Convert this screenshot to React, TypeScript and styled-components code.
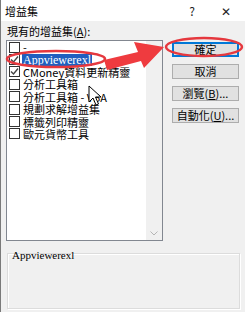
import React from 'react';
import styled, { createGlobalStyle } from 'styled-components';

const GlobalStyle = createGlobalStyle`
  html, body {
    margin: 0;
    padding: 0;
    background: #f0f0f0;
  }
  body {
    font-family: "Noto Sans CJK TC", "Liberation Sans", sans-serif;
  }
`;

const Window = styled.div`
  position: relative;
  width: 245px;
  height: 312px;
  box-sizing: border-box;
  border-left: 1px solid #7a7a7a;
  background: #f0f0f0;
  overflow: hidden;
  display: flex;
  flex-direction: column;
`;

const TitleBar = styled.div`
  height: 21px;
  background: #ffffff;
  display: flex;
  align-items: center;
  padding-left: 4px;
  font-size: 11px;
  color: #000;
`;

const Title = styled.span`
  flex: 1;
`;

const TitleButton = styled.span<{ $w: number }>`
  width: ${(p) => p.$w}px;
  text-align: center;
  font-size: 12px;
  color: #222;
`;

const Body = styled.div`
  flex: 1;
  display: flex;
  flex-direction: column;
  padding: 3px 6px 0 5px;
`;

const Label = styled.div`
  font-size: 11px;
  line-height: 14px;
  height: 16px;
  padding-left: 1px;
  color: #000;
`;

const Main = styled.div`
  display: flex;
  gap: 9px;
`;

const ListBox = styled.div`
  width: 157px;
  height: 201px;
  box-sizing: border-box;
  border: 1px solid #828790;
  background: #ffffff;
  display: flex;
`;

const Rows = styled.div`
  flex: 1;
`;

const Row = styled.div`
  height: 12.4px;
  display: flex;
  align-items: center;
  padding-left: 2px;
  font-size: 11px;
  line-height: 12px;
  white-space: nowrap;
`;

const Check = styled.span`
  width: 9px;
  height: 9px;
  border: 1px solid #333;
  background: #fff;
  margin-right: 2px;
  flex: none;
  display: flex;
  align-items: center;
  justify-content: center;
`;

const ItemText = styled.span<{ $selected?: boolean }>`
  padding: 0 1px;
  line-height: 12px;
  color: ${(p) => (p.$selected ? '#ffffff' : '#000')};
  background: ${(p) => (p.$selected ? '#1f5fbf' : 'transparent')};
  font-family: ${(p) => (p.$selected ? '"Liberation Serif", serif' : 'inherit')};
  font-size: ${(p) => (p.$selected ? '12px' : '11px')};
`;

const ScrollBar = styled.div`
  width: 16px;
  background: #f0f0f0;
  display: flex;
  flex-direction: column;
  justify-content: flex-end;
  align-items: center;
  padding-bottom: 4px;
`;

const Buttons = styled.div`
  display: flex;
  flex-direction: column;
  gap: 7px;
  padding-top: 2px;
`;

const Button = styled.div<{ $default?: boolean }>`
  width: 67px;
  height: 15px;
  box-sizing: border-box;
  border: 1px solid ${(p) => (p.$default ? '#0078d7' : '#adadad')};
  box-shadow: ${(p) => (p.$default ? 'inset 0 0 0 1px #0078d7' : 'none')};
  background: #e1e1e1;
  font-size: 11px;
  line-height: 13px;
  text-align: center;
  color: #000;
`;

const Description = styled.div`
  margin-top: 12px;
  margin-left: 1px;
  width: 233px;
  height: 56px;
  box-sizing: border-box;
  border: 1px solid #dcdcdc;
  box-shadow: inset 1px 1px 0 #ffffff, 1px 1px 0 #ffffff;
`;

const DescText = styled.span`
  display: block;
  margin-top: -4px;
  margin-left: 4px;
  font-family: "Liberation Serif", serif;
  font-size: 11px;
  line-height: 11px;
  color: #000;
`;

const Overlay = styled.svg`
  position: absolute;
  left: 0;
  top: 0;
  pointer-events: none;
`;

const items = [
  { name: '-', checked: false },
  { name: 'Appviewerexl', checked: true, selected: true },
  { name: 'CMoney資料更新精靈', checked: true },
  { name: '分析工具箱', checked: false },
  { name: '分析工具箱 - VBA', checked: false },
  { name: '規劃求解增益集', checked: false },
  { name: '標籤列印精靈', checked: false },
  { name: '歐元貨幣工具', checked: false },
];

const CheckMark = () => (
  <svg width="9" height="9" viewBox="0 0 9 9">
    <path d="M1 4.5 L3.5 7 L8 1.5" fill="none" stroke="#444" strokeWidth="1.4" />
  </svg>
);

export default function App() {
  return (
    <>
      <GlobalStyle />
      <Window>
        <TitleBar>
          <Title>增益集</Title>
          <TitleButton $w={30}>?</TitleButton>
          <TitleButton $w={38}>✕</TitleButton>
        </TitleBar>
        <Body>
          <Label>現有的增益集(<u>A</u>):</Label>
          <Main>
            <ListBox>
              <Rows>
                {items.map((it) => (
                  <Row key={it.name}>
                    <Check>{it.checked && <CheckMark />}</Check>
                    <ItemText $selected={it.selected}>{it.name}</ItemText>
                  </Row>
                ))}
              </Rows>
              <ScrollBar>
                <svg width="8" height="5" viewBox="0 0 8 5">
                  <path d="M0.5 0.5 L4 4 L7.5 0.5" fill="none" stroke="#b5b5b5" strokeWidth="1" />
                </svg>
              </ScrollBar>
            </ListBox>
            <Buttons>
              <Button $default>確定</Button>
              <Button>取消</Button>
              <Button>瀏覽(<u>B</u>)...</Button>
              <Button>自動化(<u>U</u>)...</Button>
            </Buttons>
          </Main>
          <Description>
            <DescText>Appviewerexl</DescText>
          </Description>
        </Body>
        <Overlay width="245" height="312" viewBox="0 0 245 312">
          <ellipse cx="55" cy="59" rx="49" ry="8" fill="none" stroke="#e5383e" strokeWidth="2.5" />
          <ellipse cx="203" cy="47" rx="38" ry="9" fill="none" stroke="#e5383e" strokeWidth="2.5" />
          <polygon
            points="103,60 137,52 133,42 163,47 143,68 140,61 106,70"
            fill="#ef3b3f"
          />
          <path
            d="M88 86 L88 102 L92 98 L95 105 L97.5 104 L94.5 97 L100 97 Z"
            fill="#fff"
            stroke="#000"
            strokeWidth="1"
            strokeLinejoin="round"
          />
        </Overlay>
      </Window>
    </>
  );
}
